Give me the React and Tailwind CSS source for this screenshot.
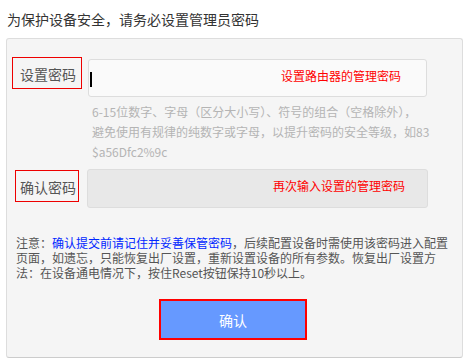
const FONT = { fontFamily: '"Noto Sans CJK SC", "Noto Sans", sans-serif' };

const Label = ({ text, className }) => (
  <div className={`h-[32px] border border-[#ee0000] flex items-center justify-end text-[14px] text-[#555] leading-none ${className}`}>
    {text}
  </div>
);

const App = () => {
  return (
    <div className="w-[465px] h-[362px] bg-white overflow-hidden" style={FONT}>
      <div className="h-[38px] pl-[7px] pt-[11px] text-[14px] leading-[16px] text-[#333]">
        为保护设备安全，请务必设置管理员密码
      </div>

      <div className="ml-[6px] w-[457px] h-[320px] bg-[#f5f5f5] border border-[#dddddd] border-b-[#cccccc] rounded-[3px]">
        {/* set password */}
        <div className="mt-[18px] flex items-start">
          <Label text="设置密码" className="ml-[5px] w-[70px] pr-[5px] pt-[2px]" />
          <div className="ml-[6px] mt-[2px] w-[339px] h-[38px] bg-[#fafafa] border border-[#dddddd] rounded-[3px] flex items-center">
            <span className="ml-[1px] mt-[2px] w-[2px] h-[15px] bg-black" />
            <span className="ml-[189px] mb-[4px] text-[12px] leading-none text-[#ff0000]">设置路由器的管理密码</span>
          </div>
        </div>

        <div className="mt-[5px] pl-[85px] text-[12px] leading-[20px] text-[#b4b4b4] whitespace-nowrap">
          <div>6-15位数字、字母（区分大小写）、符号的组合（空格除外），</div>
          <div>避免使用有规律的纯数字或字母，以提升密码的安全等级，如83</div>
          <div>$a56Dfc2%9c</div>
        </div>

        {/* confirm password */}
        <div className="mt-[7px] flex items-start">
          <Label text="确认密码" className="ml-[8px] w-[64px] pr-[2px] mt-[1px] pt-[2px]" />
          <div className="ml-[8px] w-[341px] h-[39px] bg-[#e8e8e8] border border-[#dddddd] rounded-[3px] flex items-center">
            <span className="ml-[185px] mb-[6px] text-[12px] leading-none text-[#ff0000]">再次输入设置的管理密码</span>
          </div>
        </div>

        <div className="mt-[27px] pl-[9px] text-[12px] leading-[15px] text-[#555] whitespace-nowrap">
          <div>
            注意：<span className="text-[#0026ff]">确认提交前请记住并妥善保管密码</span>，后续配置设备时需使用该密码进入配置
          </div>
          <div>页面，如遗忘，只能恢复出厂设置，重新设置设备的所有参数。恢复出厂设置方</div>
          <div>法：在设备通电情况下，按住Reset按钮保持10秒以上。</div>
        </div>

        <div className="mt-[19px] ml-[152px]">
          <button className="w-[148px] h-[41px] bg-[#6699ff] border-2 border-[#ff0000] text-white text-[14px] leading-none flex items-center justify-center">
            确认
          </button>
        </div>
      </div>
    </div>
  );
};

export default App;
